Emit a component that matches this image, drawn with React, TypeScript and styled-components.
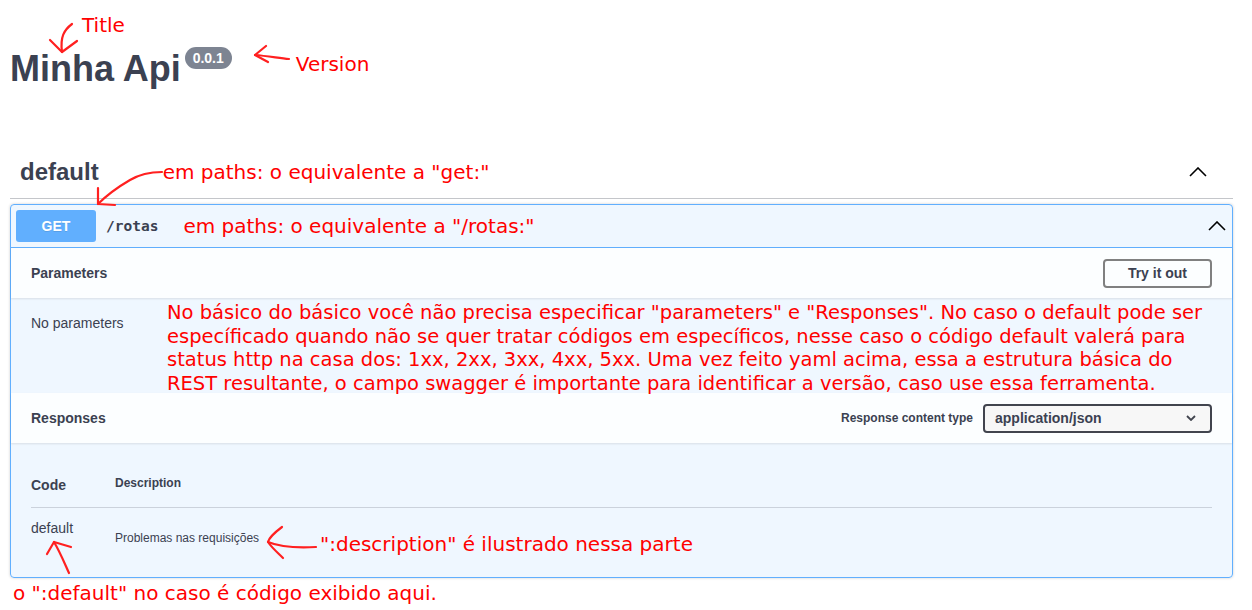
import React from "react";
import styled, { createGlobalStyle } from "styled-components";

const GlobalStyle = createGlobalStyle`
  html, body { margin: 0; padding: 0; background: #fff; }
  body {
    font-family: "Liberation Sans", Arial, sans-serif;
    color: #3b4151;
  }
  * { box-sizing: border-box; }
`;

const Page = styled.div`
  position: relative;
  width: 1252px;
  height: 610px;
  overflow: hidden;
  background: #fff;
`;

const Note = styled.span<{ $ml?: number; $mt?: number }>`
  display: inline-block;
  font-family: "DejaVu Sans", Verdana, sans-serif;
  font-size: 20px;
  line-height: 24px;
  color: #ff0000;
  white-space: nowrap;
  margin-left: ${(p) => p.$ml ?? 0}px;
  margin-top: ${(p) => p.$mt ?? 0}px;
`;

const Paragraph = styled(Note)`
  position: relative;
  z-index: 1;
  font-size: 19.5px;
  line-height: 23.7px;
`;

const Info = styled.div`
  padding: 0 10px;
`;

const TitleNoteRow = styled.div`
  height: 48px;
  padding: 13px 0 0 72px;
`;

const TitleRow = styled.div`
  display: flex;
  align-items: flex-start;
  height: 41px;
`;

const Title = styled.h2`
  margin: 0;
  font-size: 36px;
  line-height: 41px;
  font-weight: 700;
  color: #3b4151;
`;

const VersionBadge = styled.span`
  margin: -1px 0 0 4px;
  height: 22px;
  padding: 0 8px;
  display: flex;
  align-items: center;
  border-radius: 11px;
  background: #7d8492;
  color: #fff;
  font-size: 14px;
  font-weight: 700;
`;

const TagHeader = styled.h3`
  display: flex;
  align-items: center;
  width: 1223px;
  height: 54px;
  margin: 56px 0 0 10px;
  padding: 10px 26px 10px 0;
  border-bottom: 1px solid rgba(59, 65, 81, 0.3);
  font-weight: 400;
`;

const TagName = styled.span`
  padding: 0 10px;
  font-size: 24px;
  font-weight: 700;
  color: #3b4151;
`;

const Chevron = styled.svg<{ $mr?: number }>`
  margin-left: auto;
  margin-right: ${(p) => p.$mr ?? 0}px;
  flex: none;
`;

const Opblock = styled.div`
  width: 1223px;
  margin: 5px 0 0 10px;
  border: 1px solid #61affe;
  border-radius: 4px;
  background: rgba(97, 175, 254, 0.1);
  box-shadow: 0 0 3px rgba(0, 0, 0, 0.19);
`;

const Summary = styled.div`
  display: flex;
  align-items: center;
  height: 43px;
  padding: 5px;
  border-bottom: 1px solid #61affe;
`;

const MethodBadge = styled.span`
  width: 80px;
  height: 32px;
  display: flex;
  align-items: center;
  justify-content: center;
  background: #61affe;
  border-radius: 3px;
  color: #fff;
  font-size: 14px;
  font-weight: 700;
  text-shadow: 0 1px 0 rgba(0, 0, 0, 0.1);
`;

const PathText = styled.span`
  margin-left: 10px;
  font-family: "DejaVu Sans Mono", "Liberation Mono", monospace;
  font-size: 14.5px;
  font-weight: 700;
  color: #3b4151;
`;

const SectionHeader = styled.div`
  position: relative;
  display: flex;
  align-items: center;
  height: 50px;
  padding: 0 20px;
  background: rgba(255, 255, 255, 0.8);
  box-shadow: 0 1px 2px rgba(0, 0, 0, 0.1);
`;

const SectionTitle = styled.h4`
  margin: 0;
  font-size: 14px;
  font-weight: 700;
  color: #3b4151;
`;

const TryButton = styled.button`
  margin-left: auto;
  height: 29px;
  padding: 0 23px;
  border: 2px solid #808080;
  border-radius: 4px;
  background: transparent;
  font-family: "Liberation Sans", Arial, sans-serif;
  font-size: 14px;
  font-weight: 700;
  color: #3b4151;
`;

const ParamsBody = styled.div`
  display: flex;
  align-items: flex-start;
  height: 95px;
  padding-top: 3px;
`;

const NoParams = styled.div`
  width: 156px;
  padding-left: 20px;
  margin-top: 12px;
  font-size: 14px;
  line-height: 20px;
  color: #3b4151;
`;

const ParagraphLine = styled.span`
  display: block;
`;

const ContentTypeLabel = styled.span`
  margin-left: auto;
  margin-right: 10px;
  font-size: 12px;
  font-weight: 700;
  color: #3b4151;
`;

const SelectBox = styled.div`
  width: 229px;
  height: 29px;
  display: flex;
  align-items: center;
  justify-content: space-between;
  padding: 0 14px 0 10px;
  border: 2px solid #41444e;
  border-radius: 4px;
  background: #f7f7f7;
  font-size: 14px;
  font-weight: 700;
  color: #3b4151;
`;

const ResponsesBody = styled.div`
  height: 134px;
  padding: 20px;
`;

const TableHead = styled.div`
  display: grid;
  grid-template-columns: 84px 1fr;
  align-items: start;
  padding: 12px 0;
  border-bottom: 1px solid rgba(59, 65, 81, 0.2);
`;

const CodeHead = styled.span`
  font-size: 14px;
  line-height: 20px;
  font-weight: 700;
`;

const DescHead = styled.span`
  font-size: 12px;
  line-height: 16px;
  font-weight: 700;
`;

const TableRow = styled.div`
  display: grid;
  grid-template-columns: 84px 205px auto;
  align-items: start;
  padding-top: 10px;
`;

const CodeCell = styled.span`
  font-size: 14px;
  line-height: 20px;
`;

const DescCell = styled.span`
  margin-top: 12px;
  font-size: 12px;
  line-height: 16px;
`;

const Overlay = styled.svg`
  position: absolute;
  top: 0;
  left: 0;
  pointer-events: none;
`;

const ChevronUp = ({ mr }: { mr?: number }) => (
  <Chevron $mr={mr} width="18" height="10" viewBox="0 0 18 10">
    <path d="M1 9 L9 1 L17 9" fill="none" stroke="#000" strokeWidth="1.6" />
  </Chevron>
);

const arrows = [
  "M72 24 C 64 30, 60 37, 62 52",
  "M50 40 L62 52 L77 41",
  "M289 59 C 279 58, 267 56, 255 55",
  "M266 46 L255 55 L268 62",
  "M162 172 C 150 172, 140 174, 130 180 C 118 187, 106 196, 98 204",
  "M98 188 L98 204 L115 205",
  "M69 573 C 64 562, 60 552, 54 542",
  "M47 554 L54 542 L71 547",
  "M282 527 C 274 533, 269 538, 268 542 C 272 548, 278 553, 283 558",
  "M268 542 C 280 547, 298 548, 316 547",
];

export default function App() {
  return (
    <Page>
      <GlobalStyle />
      <Info>
        <TitleNoteRow>
          <Note>Title</Note>
        </TitleNoteRow>
        <TitleRow>
          <Title>Minha Api</Title>
          <VersionBadge>0.0.1</VersionBadge>
          <Note $ml={64} $mt={4}>Version</Note>
        </TitleRow>
      </Info>

      <TagHeader>
        <TagName>default</TagName>
        <Note $ml={54}>em paths: o equivalente a "get:"</Note>
        <ChevronUp />
      </TagHeader>

      <Opblock>
        <Summary>
          <MethodBadge>GET</MethodBadge>
          <PathText>/rotas</PathText>
          <Note $ml={25}>em paths: o equivalente a "/rotas:"</Note>
          <ChevronUp mr={1} />
        </Summary>

        <SectionHeader>
          <SectionTitle>Parameters</SectionTitle>
          <TryButton>Try it out</TryButton>
        </SectionHeader>
        <ParamsBody>
          <NoParams>No parameters</NoParams>
          <Paragraph>
            <ParagraphLine>
              No básico do básico você não precisa especificar "parameters" e "Responses". No caso o default pode ser
            </ParagraphLine>
            <ParagraphLine>
              específicado quando não se quer tratar códigos em específicos, nesse caso o código default valerá para
            </ParagraphLine>
            <ParagraphLine>
              status http na casa dos: 1xx, 2xx, 3xx, 4xx, 5xx. Uma vez feito yaml acima, essa a estrutura básica do
            </ParagraphLine>
            <ParagraphLine>
              REST resultante, o campo swagger é importante para identificar a versão, caso use essa ferramenta.
            </ParagraphLine>
          </Paragraph>
        </ParamsBody>

        <SectionHeader>
          <SectionTitle>Responses</SectionTitle>
          <ContentTypeLabel>Response content type</ContentTypeLabel>
          <SelectBox>
            <span>application/json</span>
            <svg width="10" height="6" viewBox="0 0 10 6">
              <path d="M1 1 L5 5 L9 1" fill="none" stroke="#41444e" strokeWidth="1.8" />
            </svg>
          </SelectBox>
        </SectionHeader>
        <ResponsesBody>
          <TableHead>
            <CodeHead>Code</CodeHead>
            <DescHead>Description</DescHead>
          </TableHead>
          <TableRow>
            <CodeCell>default</CodeCell>
            <DescCell>Problemas nas requisições</DescCell>
            <Note $mt={14}>":description" é ilustrado nessa parte</Note>
          </TableRow>
        </ResponsesBody>
      </Opblock>

      <Note $ml={13} $mt={3}>o ":default" no caso é código exibido aqui.</Note>

      <Overlay width="1252" height="610" viewBox="0 0 1252 610">
        {arrows.map((d, i) => (
          <path
            key={i}
            d={d}
            fill="none"
            stroke="#ff2020"
            strokeWidth="2.2"
            strokeLinecap="round"
            strokeLinejoin="round"
          />
        ))}
      </Overlay>
    </Page>
  );
}
